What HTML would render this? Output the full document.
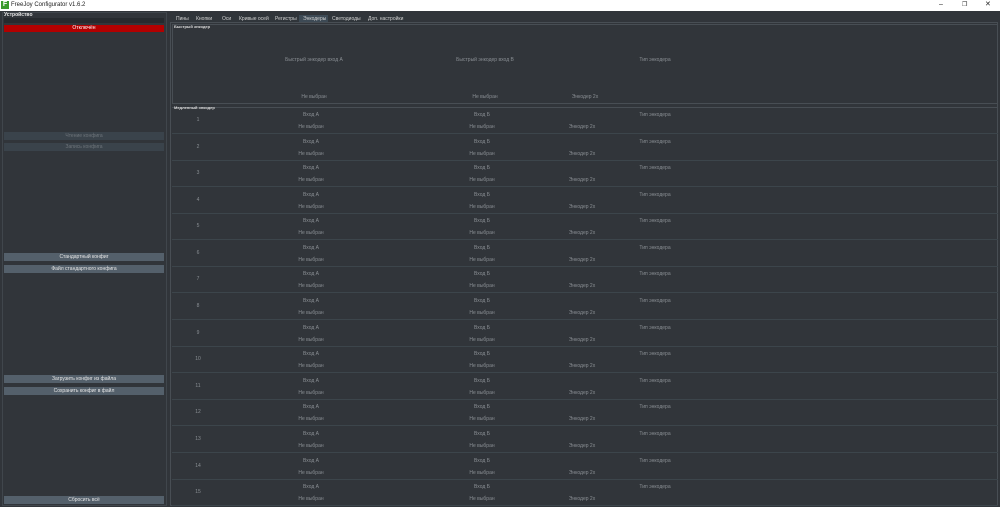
<!DOCTYPE html>
<html><head><meta charset="utf-8"><style>
*{margin:0;padding:0;box-sizing:border-box}
body{width:1000px;height:507px;background:#31353a;font-family:"Liberation Sans","DejaVu Sans",sans-serif;font-size:5px;color:#8a8f94;position:relative;overflow:hidden}
.a{position:absolute;white-space:nowrap}
.tb{left:0;top:0;width:1000px;height:11px;background:#fff;color:#222;font-size:6px}
.btn{position:absolute;left:4px;width:160px;height:8px;background:#54606b;color:#e6e6e6;text-align:center;line-height:8px;font-size:5px}
.dis{background:#3a434b;color:#6e757b}
.tab{position:absolute;top:15px;height:8px;line-height:8px;color:#d0d0d0;padding:0 4px;background:#30353a;font-size:5px}
.row{position:absolute;left:172px;width:826px;height:27px;border-bottom:1px solid #3c454b}
.c{position:absolute;transform:translateX(-50%)}
</style></head><body>
<div class="a tb"><span style="position:absolute;left:1px;top:1px;width:8px;height:8px;background:#3a9a2c;color:#fff;font-size:7px;font-weight:bold;line-height:8px;text-align:center">F</span><span style="position:absolute;left:11px;top:2px">FreeJoy Configurator v1.6.2</span><span style="position:absolute;left:939px;top:1px;font-size:7px">–</span><span style="position:absolute;left:962px;top:1px;font-size:6px">❐</span><span style="position:absolute;left:985px;top:0px;font-size:7px">✕</span></div>
<div class="a" style="left:2px;top:12px;width:165px;height:494px;border:1px solid #40464c"></div>
<div class="a" style="left:4px;top:12px;color:#e8e8e8;font-weight:bold">Устройство</div>
<div class="a" style="left:4px;top:18px;width:160px;height:5px;background:#262a2e"></div>
<div class="a" style="left:4px;top:25px;width:160px;height:7px;background:#b20000;color:#fff;text-align:center;line-height:7px">Отключён</div>
<div class="btn dis" style="top:132px">Чтение конфига</div>
<div class="btn dis" style="top:143px">Запись конфига</div>
<div class="btn" style="top:253px">Стандартный конфиг</div>
<div class="btn" style="top:265px">Файл стандартного конфига</div>
<div class="btn" style="top:375px">Загрузить конфиг из файла</div>
<div class="btn" style="top:387px">Сохранить конфиг в файл</div>
<div class="btn" style="top:496px">Сбросить всё</div>
<div class="tab" style="left:172px">Пины</div>
<div class="tab" style="left:192px">Кнопки</div>
<div class="tab" style="left:218px">Оси</div>
<div class="tab" style="left:235px">Кривые осей</div>
<div class="tab" style="left:271px">Регистры</div>
<div class="tab" style="left:299px;background:#3d4a55;border-bottom:1px solid #7aa0c0">Энкодеры</div>
<div class="tab" style="left:328px">Светодиоды</div>
<div class="tab" style="left:364px">Доп. настройки</div>
<div class="a" style="left:170px;top:22px;width:828px;height:484px;border:1px solid #484e54"></div>
<div class="a" style="left:172px;top:24px;width:826px;height:80px;border:1px solid #484e54"></div>
<div class="a" style="left:174px;top:24px;color:#ddd;font-weight:bold;font-size:4px">Быстрый энкодер</div>
<div class="a c" style="left:314px;top:57px">Быстрый энкодер вход А</div>
<div class="a c" style="left:485px;top:57px">Быстрый энкодер вход В</div>
<div class="a c" style="left:655px;top:57px">Тип энкодера</div>
<div class="a c" style="left:314px;top:94px">Не выбран</div>
<div class="a c" style="left:485px;top:94px">Не выбран</div>
<div class="a c" style="left:585px;top:94px">Энкодер 2х</div>
<div class="a" style="left:172px;top:107px;width:826px;border-top:1px solid #484e54"></div>
<div class="a" style="left:174px;top:105px;color:#ddd;font-weight:bold;font-size:4px">Медленный энкодер</div>
<div class="row" style="top:107px"><span class="a c" style="left:26px;top:10px">1</span><span class="a c" style="left:139px;top:5px">Вход А</span><span class="a c" style="left:310px;top:5px">Вход Б</span><span class="a c" style="left:483px;top:5px">Тип энкодера</span><span class="a c" style="left:139px;top:17px">Не выбран</span><span class="a c" style="left:310px;top:17px">Не выбран</span><span class="a c" style="left:410px;top:17px">Энкодер 2х</span></div>
<div class="row" style="top:134px"><span class="a c" style="left:26px;top:10px">2</span><span class="a c" style="left:139px;top:5px">Вход А</span><span class="a c" style="left:310px;top:5px">Вход Б</span><span class="a c" style="left:483px;top:5px">Тип энкодера</span><span class="a c" style="left:139px;top:17px">Не выбран</span><span class="a c" style="left:310px;top:17px">Не выбран</span><span class="a c" style="left:410px;top:17px">Энкодер 2х</span></div>
<div class="row" style="top:160px"><span class="a c" style="left:26px;top:10px">3</span><span class="a c" style="left:139px;top:5px">Вход А</span><span class="a c" style="left:310px;top:5px">Вход Б</span><span class="a c" style="left:483px;top:5px">Тип энкодера</span><span class="a c" style="left:139px;top:17px">Не выбран</span><span class="a c" style="left:310px;top:17px">Не выбран</span><span class="a c" style="left:410px;top:17px">Энкодер 2х</span></div>
<div class="row" style="top:187px"><span class="a c" style="left:26px;top:10px">4</span><span class="a c" style="left:139px;top:5px">Вход А</span><span class="a c" style="left:310px;top:5px">Вход Б</span><span class="a c" style="left:483px;top:5px">Тип энкодера</span><span class="a c" style="left:139px;top:17px">Не выбран</span><span class="a c" style="left:310px;top:17px">Не выбран</span><span class="a c" style="left:410px;top:17px">Энкодер 2х</span></div>
<div class="row" style="top:213px"><span class="a c" style="left:26px;top:10px">5</span><span class="a c" style="left:139px;top:5px">Вход А</span><span class="a c" style="left:310px;top:5px">Вход Б</span><span class="a c" style="left:483px;top:5px">Тип энкодера</span><span class="a c" style="left:139px;top:17px">Не выбран</span><span class="a c" style="left:310px;top:17px">Не выбран</span><span class="a c" style="left:410px;top:17px">Энкодер 2х</span></div>
<div class="row" style="top:240px"><span class="a c" style="left:26px;top:10px">6</span><span class="a c" style="left:139px;top:5px">Вход А</span><span class="a c" style="left:310px;top:5px">Вход Б</span><span class="a c" style="left:483px;top:5px">Тип энкодера</span><span class="a c" style="left:139px;top:17px">Не выбран</span><span class="a c" style="left:310px;top:17px">Не выбран</span><span class="a c" style="left:410px;top:17px">Энкодер 2х</span></div>
<div class="row" style="top:266px"><span class="a c" style="left:26px;top:10px">7</span><span class="a c" style="left:139px;top:5px">Вход А</span><span class="a c" style="left:310px;top:5px">Вход Б</span><span class="a c" style="left:483px;top:5px">Тип энкодера</span><span class="a c" style="left:139px;top:17px">Не выбран</span><span class="a c" style="left:310px;top:17px">Не выбран</span><span class="a c" style="left:410px;top:17px">Энкодер 2х</span></div>
<div class="row" style="top:293px"><span class="a c" style="left:26px;top:10px">8</span><span class="a c" style="left:139px;top:5px">Вход А</span><span class="a c" style="left:310px;top:5px">Вход Б</span><span class="a c" style="left:483px;top:5px">Тип энкодера</span><span class="a c" style="left:139px;top:17px">Не выбран</span><span class="a c" style="left:310px;top:17px">Не выбран</span><span class="a c" style="left:410px;top:17px">Энкодер 2х</span></div>
<div class="row" style="top:320px"><span class="a c" style="left:26px;top:10px">9</span><span class="a c" style="left:139px;top:5px">Вход А</span><span class="a c" style="left:310px;top:5px">Вход Б</span><span class="a c" style="left:483px;top:5px">Тип энкодера</span><span class="a c" style="left:139px;top:17px">Не выбран</span><span class="a c" style="left:310px;top:17px">Не выбран</span><span class="a c" style="left:410px;top:17px">Энкодер 2х</span></div>
<div class="row" style="top:346px"><span class="a c" style="left:26px;top:10px">10</span><span class="a c" style="left:139px;top:5px">Вход А</span><span class="a c" style="left:310px;top:5px">Вход Б</span><span class="a c" style="left:483px;top:5px">Тип энкодера</span><span class="a c" style="left:139px;top:17px">Не выбран</span><span class="a c" style="left:310px;top:17px">Не выбран</span><span class="a c" style="left:410px;top:17px">Энкодер 2х</span></div>
<div class="row" style="top:373px"><span class="a c" style="left:26px;top:10px">11</span><span class="a c" style="left:139px;top:5px">Вход А</span><span class="a c" style="left:310px;top:5px">Вход Б</span><span class="a c" style="left:483px;top:5px">Тип энкодера</span><span class="a c" style="left:139px;top:17px">Не выбран</span><span class="a c" style="left:310px;top:17px">Не выбран</span><span class="a c" style="left:410px;top:17px">Энкодер 2х</span></div>
<div class="row" style="top:399px"><span class="a c" style="left:26px;top:10px">12</span><span class="a c" style="left:139px;top:5px">Вход А</span><span class="a c" style="left:310px;top:5px">Вход Б</span><span class="a c" style="left:483px;top:5px">Тип энкодера</span><span class="a c" style="left:139px;top:17px">Не выбран</span><span class="a c" style="left:310px;top:17px">Не выбран</span><span class="a c" style="left:410px;top:17px">Энкодер 2х</span></div>
<div class="row" style="top:426px"><span class="a c" style="left:26px;top:10px">13</span><span class="a c" style="left:139px;top:5px">Вход А</span><span class="a c" style="left:310px;top:5px">Вход Б</span><span class="a c" style="left:483px;top:5px">Тип энкодера</span><span class="a c" style="left:139px;top:17px">Не выбран</span><span class="a c" style="left:310px;top:17px">Не выбран</span><span class="a c" style="left:410px;top:17px">Энкодер 2х</span></div>
<div class="row" style="top:453px"><span class="a c" style="left:26px;top:10px">14</span><span class="a c" style="left:139px;top:5px">Вход А</span><span class="a c" style="left:310px;top:5px">Вход Б</span><span class="a c" style="left:483px;top:5px">Тип энкодера</span><span class="a c" style="left:139px;top:17px">Не выбран</span><span class="a c" style="left:310px;top:17px">Не выбран</span><span class="a c" style="left:410px;top:17px">Энкодер 2х</span></div>
<div class="row" style="top:479px"><span class="a c" style="left:26px;top:10px">15</span><span class="a c" style="left:139px;top:5px">Вход А</span><span class="a c" style="left:310px;top:5px">Вход Б</span><span class="a c" style="left:483px;top:5px">Тип энкодера</span><span class="a c" style="left:139px;top:17px">Не выбран</span><span class="a c" style="left:310px;top:17px">Не выбран</span><span class="a c" style="left:410px;top:17px">Энкодер 2х</span></div>
</body></html>
